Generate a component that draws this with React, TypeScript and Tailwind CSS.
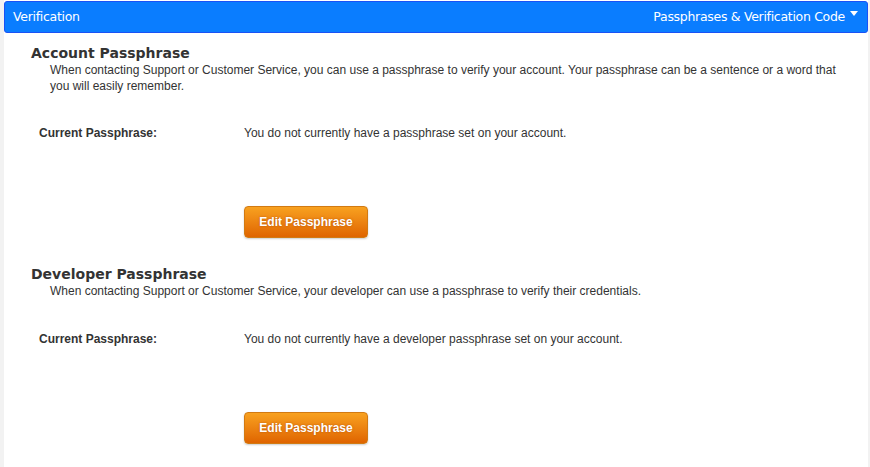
import React from "react";

function Section({ title, desc, value, gapTop, gapBtn }: { title: string; desc: React.ReactNode; value: string; gapTop: string; gapBtn: string }) {
  return (
    <div className="pl-[27px]">
      <h2 className="text-[14px] leading-[17px] font-bold text-[#333]" style={{ fontFamily: '"DejaVu Sans", Verdana, sans-serif' }}>
        {title}
      </h2>
      <p className="pl-[19px] pr-[20px] text-[12px] leading-[16px] text-[#333]">{desc}</p>
      <div className={`flex ${gapTop} pl-[8px] text-[12px] leading-[16px] text-[#333]`}>
        <div className="w-[205px] font-bold">Current Passphrase:</div>
        <div>{value}</div>
      </div>
      <div className={`pl-[213px] ${gapBtn}`}>
        <button className="h-[32px] w-[124px] rounded-[4px] border border-[#d27a12] bg-gradient-to-b from-[#f8a11f] to-[#df6400] text-[12px] font-bold text-white shadow-[0_1px_2px_rgba(0,0,0,0.2)] [text-shadow:0_0_2px_rgba(160,60,0,0.7)]">
          Edit Passphrase
        </button>
      </div>
    </div>
  );
}

export default function App() {
  return (
    <div className="min-h-screen bg-[#f2f2f2] pl-[4px] pr-[2px]" style={{ fontFamily: '"Liberation Sans", Arial, sans-serif' }}>
      <div className="min-h-[467px] bg-white pt-[1px]">
        <div
          className="flex h-[32px] items-center justify-between rounded-[3px] border border-[#1a52f5] bg-[#0a7dff] pl-[8px] pr-[9px] text-[12.5px] text-white"
          style={{ fontFamily: '"DejaVu Sans", Verdana, sans-serif' }}
        >
          <span className="tracking-[-0.3px]">Verification</span>
          <span className="flex items-start tracking-[-0.3px]">
            Passphrases &amp; Verification Code
            <svg width="8" height="5" viewBox="0 0 8 5" className="ml-[5px] mt-[3px]">
              <path d="M0 0 L8 0 L4 5 Z" fill="white" />
            </svg>
          </span>
        </div>
        <div className="pt-[12px]">
          <Section
            title="Account Passphrase"
            desc="When contacting Support or Customer Service, you can use a passphrase to verify your account. Your passphrase can be a sentence or a word that you will easily remember."
            value="You do not currently have a passphrase set on your account."
            gapTop="mt-[31px]"
            gapBtn="mt-[65px]"
          />
          <div className="h-[28px]" />
          <Section
            title="Developer Passphrase"
            desc="When contacting Support or Customer Service, your developer can use a passphrase to verify their credentials."
            value="You do not currently have a developer passphrase set on your account."
            gapTop="mt-[32px]"
            gapBtn="mt-[65px]"
          />
        </div>
      </div>
    </div>
  );
}
